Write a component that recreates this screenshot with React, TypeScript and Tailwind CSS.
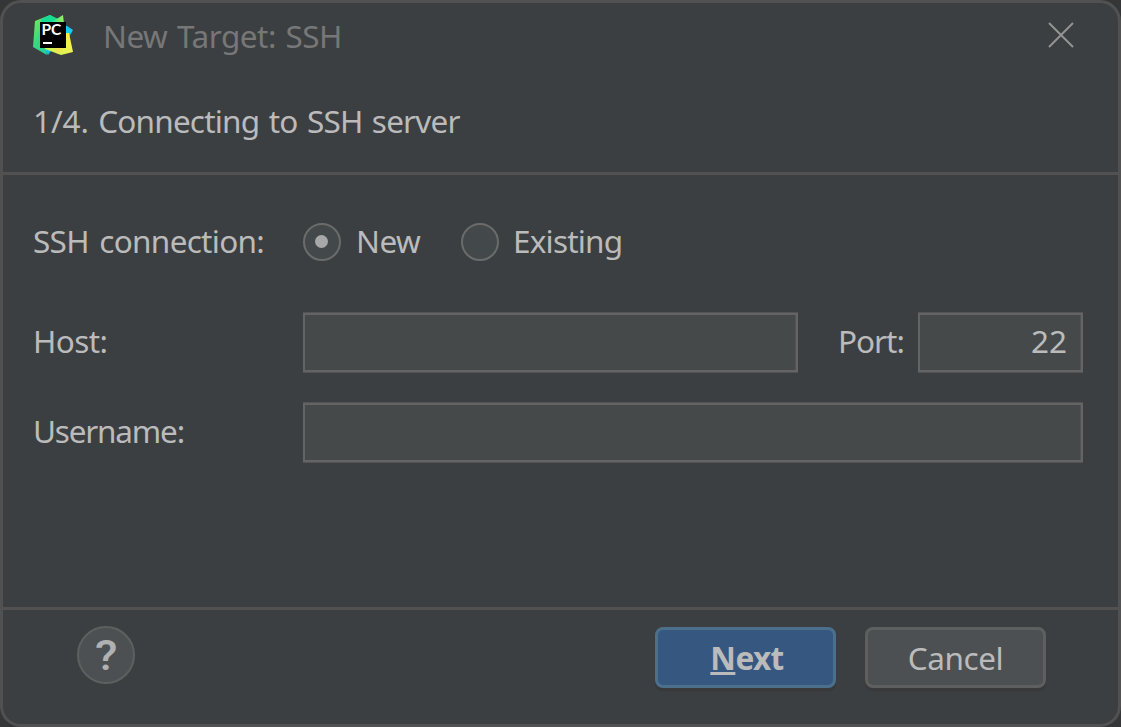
import React, { useState } from "react";

function PyCharmLogo() {
  return (
    <svg width="40" height="40" viewBox="0 0 40 40" className="shrink-0" aria-hidden="true">
      <defs>
        <linearGradient id="pcGreen" x1="0" y1="0.2" x2="0.6" y2="1">
          <stop offset="0" stopColor="#6be85a" />
          <stop offset="0.5" stopColor="#35d683" />
          <stop offset="1" stopColor="#1fd39a" />
        </linearGradient>
        <linearGradient id="pcLime" x1="0" y1="0" x2="1" y2="0">
          <stop offset="0" stopColor="#1bdc9a" />
          <stop offset="1" stopColor="#9af25a" />
        </linearGradient>
        <linearGradient id="pcYellow" x1="0" y1="0.8" x2="1" y2="0.2">
          <stop offset="0" stopColor="#c6f554" />
          <stop offset="1" stopColor="#fff04a" />
        </linearGradient>
      </defs>
      <path d="M28 9 L34 11 L40 15 L36 22 L28 19Z" fill="#0fcdf4" />
      <path d="M6 30 L15 40 L18 36 L14 30Z" fill="#14bfe0" />
      <path d="M2 6 L17 0 L25 4 L18 10 L12 33 L14 40 L0 32Z" fill="url(#pcGreen)" />
      <path d="M8 4 L17 0 L24 4 L17 9 L8 10Z" fill="#15de94" />
      <path d="M17 8 L30 0 L31 9 L17 12Z" fill="url(#pcLime)" />
      <path d="M31 18 L36 18 L40 37 L28 40 L12 34 L12 31 L31 31Z" fill="url(#pcYellow)" />
      <path d="M20 31 L31 33 L25 39Z" fill="#f0e34c" />
      <rect x="7" y="7" width="26" height="26" fill="#000" />
      <text x="8.4" y="20.4" fill="#fff" fontSize="15" fontWeight="700" textLength="20" lengthAdjust="spacingAndGlyphs" fontFamily="Lato, sans-serif">
        PC
      </text>
      <rect x="10" y="27" width="9" height="2" fill="#fff" />
    </svg>
  );
}

function Radio({ checked, onChange, children }: { checked: boolean; onChange: () => void; children: React.ReactNode }) {
  return (
    <button type="button" role="radio" aria-checked={checked} onClick={onChange} className="flex items-center">
      <span className="mt-px flex size-[38px] items-center justify-center rounded-full border-2 border-[#6b6b6b] bg-[#43494a]">
        {checked && <span className="mr-px size-[13px] rounded-full bg-[#a8a8a8]" />}
      </span>
      {children}
    </button>
  );
}

const field =
  "h-[59px] rounded-none border-2 border-[#646464] bg-[#45494a] outline-none shadow-[0_1px_0_#525354,0_-1px_0_#525354,inset_-1px_0_0_#525354]";

export default function App() {
  const [mode, setMode] = useState("new");
  return (
    <div className="h-[727px] w-[1121px] overflow-hidden bg-[#343637] font-['Noto_Sans',sans-serif] text-[31.5px] leading-[44px] text-[#bbbbbb]">
      <main className="flex h-full w-full flex-col rounded-[21px] border-[3px] border-[#515151] bg-[#3c3f41]">
        <header className="flex h-[172px] shrink-0 flex-col border-b-[3px] border-[#515151]">
          <div className="flex items-start pl-[30px] pr-[44px] pt-3">
            <PyCharmLogo />
            <h1 className="-mt-px ml-[30px] flex-1 tracking-[-0.5px] text-[#777777] [word-spacing:2px]">New Target: SSH</h1>
            <button type="button" aria-label="Close" className="mt-[7px]">
              <svg width="26" height="26" viewBox="0 0 26 26" fill="none" stroke="#939393" strokeWidth="2">
                <path d="M1 1 25 25M25 1 1 25" />
              </svg>
            </button>
          </div>
          <h2 className="mt-[41px] pl-[30px] tracking-[-0.8px] [word-spacing:2px]">
            <span className="tracking-[-0.1px]">1/4.</span> Connecting to SSH server
          </h2>
        </header>

        <section className="flex flex-1 flex-col pl-[30px] pr-[35px] pt-[44px]">
          <div className="flex h-[44px] items-center">
            <span className="w-[270px] tracking-[-0.7px] [word-spacing:3px]">SSH connection:</span>
            <div role="radiogroup" className="flex">
              <Radio checked={mode === "new"} onChange={() => setMode("new")}>
                <span className="ml-[15px] w-[105px] text-left tracking-[-0.5px]">New</span>
              </Radio>
              <Radio checked={mode === "existing"} onChange={() => setMode("existing")}>
                <span className="ml-[14px] tracking-[-0.8px]">Existing</span>
              </Radio>
            </div>
          </div>
          <div className="mt-[50px] flex h-[59px] items-center">
            <label htmlFor="host" className="w-[270px] pb-[4px] tracking-[-0.6px]">Host:</label>
            <input id="host" className={`${field} w-[495px]`} />
            <label htmlFor="port" className="ml-[40px] w-[80px] pb-[4px] tracking-[-1px]">Port:</label>
            <input id="port" defaultValue="22" className={`${field} w-[165px] pb-[4px] pr-[14px] text-right`} />
          </div>
          <div className="mt-[31px] flex h-[59px] items-center">
            <label htmlFor="user" className="w-[270px] pb-[4px] tracking-[-1.2px]">Username:</label>
            <input id="user" className={`${field} w-[780px]`} />
          </div>
        </section>

        <footer className="flex h-[117px] shrink-0 items-start border-t-[3px] border-[#515151] pl-[74px] pr-[72px] pt-4">
          <button type="button" aria-label="Help" className="flex size-[58px] items-center justify-center rounded-full border-2 border-[#5e6060] bg-[#4c5052] pt-px font-['Roboto',sans-serif] text-[42px] font-medium text-[#afb1b3]">
            <span className="scale-x-110">?</span>
          </button>
          <div className="ml-auto mt-px flex gap-[29px]">
            <button type="button" className="h-[61px] w-[181px] rounded-[8px] border-[3px] border-[#4c708c] bg-[#365880] pl-[3px] pt-px font-bold tracking-[-0.6px] shadow-[0_3px_1px_#37393a]">
              <span className="underline decoration-[3px] underline-offset-[2px] [text-decoration-skip-ink:none]">N</span>ext
            </button>
            <button type="button" className="h-[61px] w-[181px] rounded-[8px] border-[3px] border-[#5e6060] bg-[#4c5052] pt-px tracking-[-0.4px] shadow-[0_3px_1px_#37393a]">
              Cancel
            </button>
          </div>
        </footer>
      </main>
    </div>
  );
}
